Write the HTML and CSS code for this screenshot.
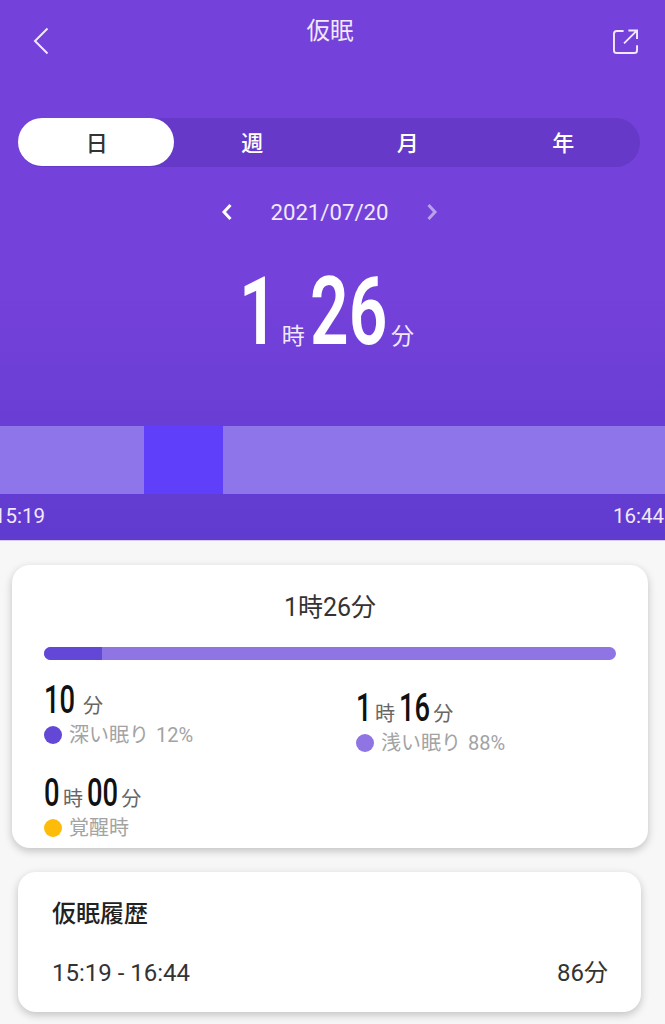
FILE: index.html
```html
<!DOCTYPE html>
<html lang="ja">
<head>
    <meta charset="UTF-8">
    <meta name="viewport" content="width=device-width, initial-scale=1.0">
    <title>仮眠</title>
    <link rel="stylesheet" href="styles.css">
</head>
<body>
    <header class="hero">
        <div class="top-bar">
            <svg class="back-icon" viewBox="0 0 16 28">
                <path d="M14.5 1.5L2 14l12.500 12.500"></path>
            </svg>
            <h1>仮眠</h1>
            <svg class="share-icon" viewBox="0 0 26 26">
                <path d="M11 2H4a3 3 0 0 0-3 3v17a3 3 0 0 0 3 3h18a3 3 0 0 0 3-3v-5"></path>
                <path d="M11.500 15L24.500 2M16 1.500h9v9"></path>
            </svg>
        </div>

        <div class="tabs">
            <div class="tab active">日</div>
            <div class="tab">週</div>
            <div class="tab">月</div>
            <div class="tab">年</div>
        </div>

        <div class="date-row">
            <svg class="date-arrow" viewBox="0 0 12 18">
                <path d="M9.500 2L3 9l6.500 7"></path>
            </svg>
            <span>2021/07/20</span>
            <svg class="date-arrow dim" viewBox="0 0 12 18">
                <path d="M2.500 2L9 9l-6.500 7"></path>
            </svg>
        </div>

        <div class="total">
            <span class="num d1">1</span><span class="unit unit-hour">時</span><span class="num d2">26</span><span class="unit unit-min">分</span>
        </div>

        <div class="timeline">
            <div class="seg light seg-a"></div>
            <div class="seg deep seg-b"></div>
            <div class="seg light seg-c"></div>
        </div>
        <div class="timeline-labels">
            <span>15:19</span>
            <span>16:44</span>
        </div>
    </header>

    <section class="card summary">
        <div class="summary-title">1時26分</div>
        <div class="bar"><div class="bar-deep"></div></div>
        <div class="stats">
            <div class="stat">
                <div class="stat-value"><span class="num d2">10</span><span class="unit unit-wide">分</span></div>
                <div class="stat-label"><i class="dot dot-deep"></i>深い眠り 12%</div>
            </div>
            <div class="stat stat-lower">
                <div class="stat-value"><span class="num d1">1</span><span class="unit">時</span><span class="num d2">16</span><span class="unit">分</span></div>
                <div class="stat-label"><i class="dot dot-light"></i>浅い眠り 88%</div>
            </div>
            <div class="stat">
                <div class="stat-value"><span class="num d1">0</span><span class="unit">時</span><span class="num d2">00</span><span class="unit">分</span></div>
                <div class="stat-label"><i class="dot dot-awake"></i>覚醒時</div>
            </div>
        </div>
    </section>

    <section class="card history">
        <h2>仮眠履歴</h2>
        <div class="history-row">
            <span>15:19 - 16:44</span>
            <span>86分</span>
        </div>
    </section>
</body>
</html>
```

FILE: styles.css
```css
html, body {
    height: 100%;
}

body {
    margin: 0;
    overflow: hidden;
    background-color: #f7f7f7;
    font-family: Roboto, "Noto Sans CJK JP", sans-serif;
    color: #333;
}

.hero {
    height: 540px;
    overflow: hidden;
    border-bottom: 1px solid #d8ccf2;
    background: linear-gradient(#7441da 0%, #7441da 55%, #603bcf 100%);
    color: #fff;
}

.top-bar {
    display: flex;
    justify-content: space-between;
    height: 118px;
    padding: 0 27px 0 33px;
}

.top-bar h1 {
    margin: 14px 2px 0 0;
    font-size: 23.500px;
    font-weight: 400;
    line-height: 35px;
    color: #f1e9fb;
}

.back-icon {
    width: 16px;
    height: 28px;
    margin-top: 27px;
    fill: none;
    stroke: #f1e9fb;
    stroke-width: 2;
}

.share-icon {
    width: 25px;
    height: 25px;
    margin-top: 29px;
    fill: none;
    stroke: #f1e9fb;
    stroke-width: 2;
}

.tabs {
    display: flex;
    width: 622px;
    height: 49px;
    margin-left: 18px;
    border-radius: 25px;
    background-color: #6739c8;
}

.tab {
    flex: 1;
    display: flex;
    align-items: center;
    justify-content: center;
    padding: 0 0 3px 2px;
    border-radius: 25px;
    font-size: 22px;
    font-weight: 500;
}

.tab.active {
    height: 45px;
    background-color: #fff;
    color: #333;
}

.date-row {
    display: flex;
    align-items: center;
    justify-content: center;
    gap: 37px;
    height: 32px;
    margin: 29px 6px 0 0;
    font-size: 22.200px;
    color: #f1e9fb;
}

.date-arrow {
    width: 12px;
    height: 18px;
    fill: none;
    stroke: #fff;
    stroke-width: 3;
}

.date-arrow.dim {
    stroke: #b9a2ea;
}

.num {
    display: inline-block;
    transform: scaleX(.72);
    transform-origin: 0 50%;
    white-space: nowrap;
}

.d1 {
    width: .72ch;
}

.d2 {
    width: 1.44ch;
}

.total {
    height: 198px;
    margin-right: 12px;
    text-align: center;
    font-size: 94px;
    font-weight: 600;
    line-height: 168px;
}

.total .unit {
    font-size: 23px;
    font-weight: 400;
    color: #f1e9fb;
}

.total .unit-hour {
    margin: 0 5px 0 4px;
}

.total .unit-min {
    margin-left: 4px;
}

.timeline {
    display: flex;
    height: 68px;
}

.seg-a {
    width: 144px;
}

.seg-b {
    width: 79px;
}

.seg-c {
    flex: 1;
}

.light {
    background-color: #8f75ea;
}

.deep {
    background-color: #5f3ffa;
}

.timeline-labels {
    display: flex;
    justify-content: space-between;
    margin: 9px 1px 0 -6px;
    font-size: 20.500px;
    line-height: 26px;
    color: #f1e9fb;
}

.card {
    background-color: #fff;
    border-radius: 18px;
    box-shadow: 0 3px 8px rgba(0, 0, 0, 0.22);
}

.summary {
    height: 283px;
    margin: 24px 17px 0 12px;
    padding: 0 32px;
    overflow: hidden;
}

.summary-title {
    margin-top: 27px;
    text-align: center;
    font-size: 25px;
    line-height: 32px;
}

.bar {
    height: 13px;
    margin-top: 23px;
    overflow: hidden;
    border-radius: 7px;
    background-color: #8f75e4;
}

.bar-deep {
    width: 58px;
    height: 100%;
    background-color: #6347d6;
}

.stats {
    display: grid;
    grid-template-columns: 312px 1fr;
    row-gap: 15px;
    margin-top: 18px;
}

.stat-lower {
    padding-top: 8px;
}

.stat-value {
    height: 44px;
    font-size: 38px;
    font-weight: 500;
    line-height: 44px;
    color: #111;
    white-space: nowrap;
}

.stat-value .unit {
    margin: 0 3.500px;
    font-size: 20px;
    font-weight: 400;
    color: #666;
}

.stat-value .unit-wide {
    margin-left: 8px;
}

.stat-label {
    display: flex;
    align-items: center;
    gap: 7px;
    font-size: 20px;
    line-height: 26px;
    word-spacing: 2px;
    color: #a3a3a3;
}

.dot {
    flex: none;
    width: 18px;
    height: 18px;
    border-radius: 50%;
}

.dot-deep {
    background-color: #6347d6;
}

.dot-light {
    background-color: #8f75e4;
}

.dot-awake {
    background-color: #fdbb0a;
}

.history {
    height: 140px;
    margin: 24px 24px 0 18px;
    padding: 0 33px 0 34px;
    overflow: hidden;
}

.history h2 {
    margin: 25px 0 0;
    font-size: 24px;
    font-weight: 500;
    line-height: 34px;
    color: #222;
}

.history-row {
    display: flex;
    justify-content: space-between;
    margin-top: 25px;
    font-size: 24px;
    line-height: 34px;
    color: #333;
}
```
